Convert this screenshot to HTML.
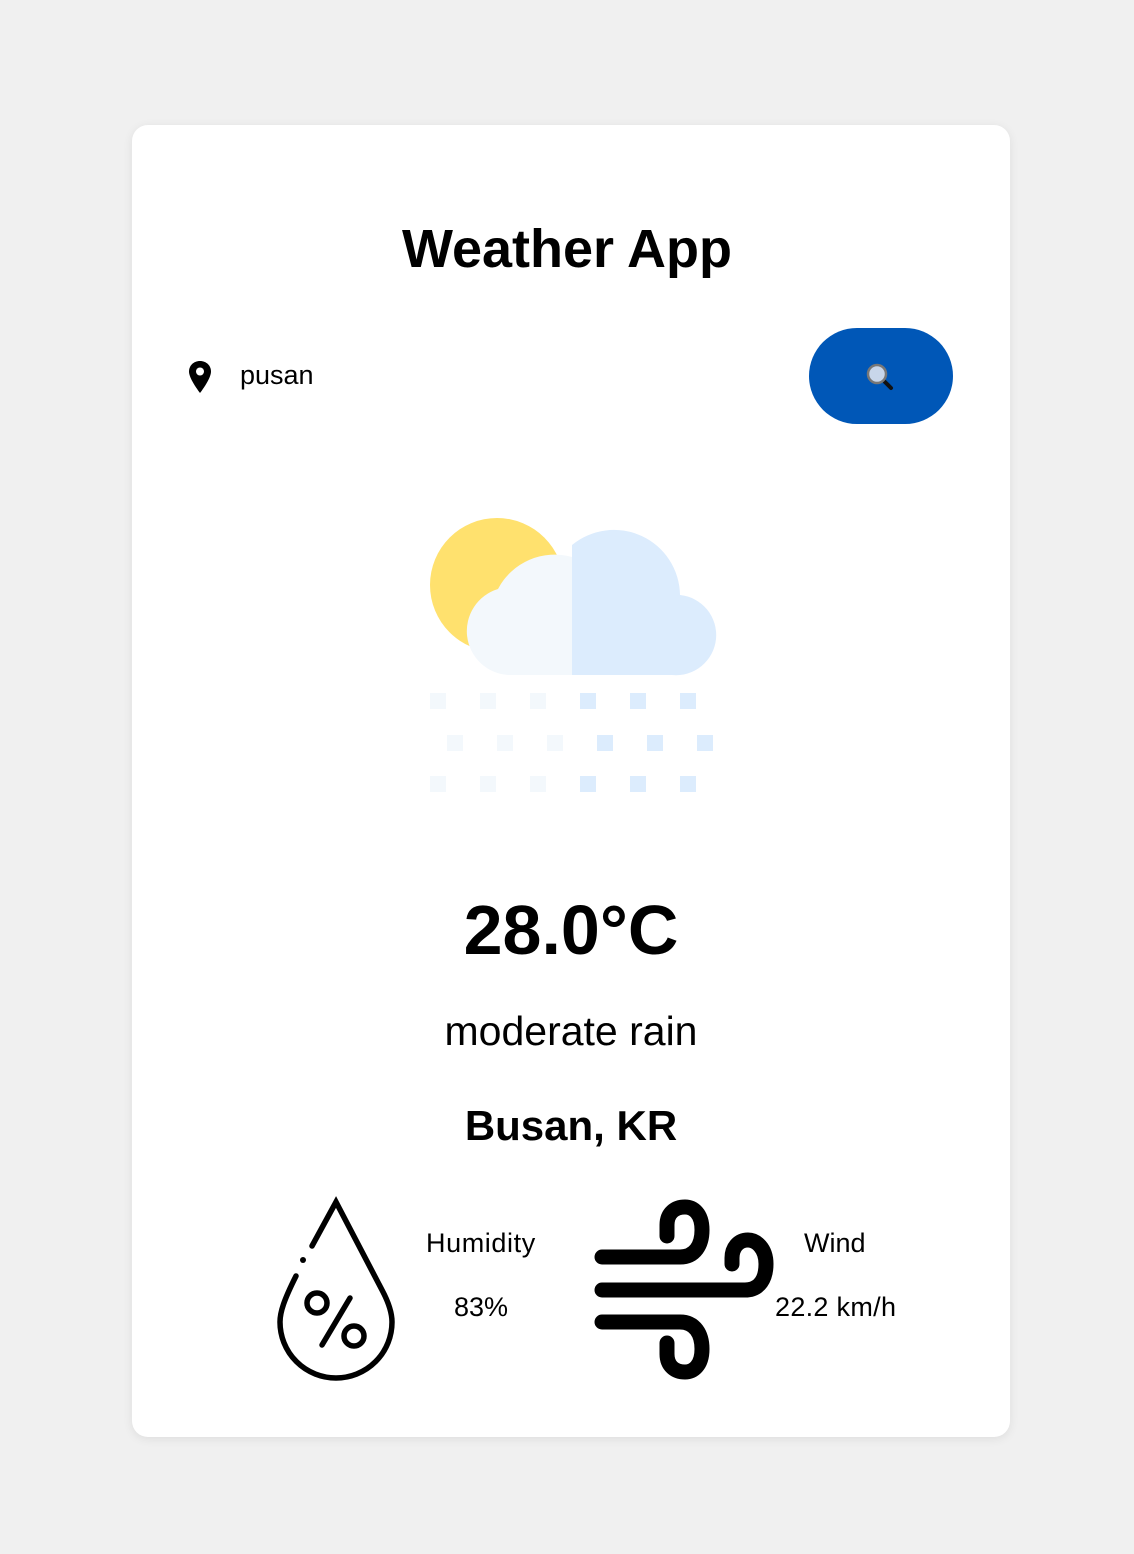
<!DOCTYPE html>
<html><head><meta charset="utf-8"><style>
html,body{margin:0;padding:0;background:#f0f0f0;width:1134px;height:1554px;overflow:hidden;font-family:"Liberation Sans","Noto Sans CJK KR",sans-serif}
.card{position:absolute;left:132px;top:125px;width:878px;height:1312px;background:#fff;border-radius:16px;box-shadow:0 2px 10px rgba(0,0,0,.08)}
.t{position:absolute;left:0;width:1134px;text-align:center;color:#000}
.btn{position:absolute;left:809px;top:328px;width:144px;height:96px;border-radius:48px;background:#0057b7}
</style></head><body>
<div class="card"></div>
<div class="t" style="top:218px;font-size:54px;font-weight:bold;left:0px">Weather App</div>
<svg style="position:absolute;left:188px;top:360px" width="24" height="34" viewBox="0 0 24 34"><path d="M12 1C5.5 1 1 5.8 1 11.5 1 19 12 33 12 33S23 19 23 11.5C23 5.8 18.5 1 12 1z" fill="#000"/><circle cx="12" cy="11.5" r="4" fill="#fff"/></svg>
<div style="position:absolute;left:240px;top:360px;font-size:27px">pusan</div>
<div class="btn"></div>
<svg style="position:absolute;left:864px;top:361px" width="32" height="30" viewBox="0 0 32 30"><line x1="18" y1="18" x2="27" y2="27" stroke="#111" stroke-width="4" stroke-linecap="round"/><circle cx="13" cy="13" r="9" fill="#c8d6ea" stroke="#777" stroke-width="2.5"/></svg>
<svg style="position:absolute;left:420px;top:510px" width="310" height="300" viewBox="420 510 310 300">
<circle cx="497" cy="585" r="67" fill="#ffe16e"/>
<path d="M572 675H508a44 44 0 0 1-10-86 64 64 0 0 1 74-32z" fill="#f3f8fc"/>
<path d="M572 545a66 66 0 0 1 108 50 40 40 0 0 1-8 80H572z" fill="#dcecfd"/>
<g fill="#f3f8fc"><rect x="430" y="693" width="16" height="16"/><rect x="480" y="693" width="16" height="16"/><rect x="530" y="693" width="16" height="16"/><rect x="447" y="735" width="16" height="16"/><rect x="497" y="735" width="16" height="16"/><rect x="547" y="735" width="16" height="16"/><rect x="430" y="776" width="16" height="16"/><rect x="480" y="776" width="16" height="16"/><rect x="530" y="776" width="16" height="16"/></g>
<g fill="#dcecfd"><rect x="580" y="693" width="16" height="16"/><rect x="630" y="693" width="16" height="16"/><rect x="680" y="693" width="16" height="16"/><rect x="597" y="735" width="16" height="16"/><rect x="647" y="735" width="16" height="16"/><rect x="697" y="735" width="16" height="16"/><rect x="580" y="776" width="16" height="16"/><rect x="630" y="776" width="16" height="16"/><rect x="680" y="776" width="16" height="16"/></g>
</svg>
<div class="t" style="top:890px;font-size:70px;font-weight:bold;left:4px">28.0°C</div>
<div class="t" style="top:1008px;font-size:41px;left:4px">moderate rain</div>
<div class="t" style="top:1102px;font-size:42px;font-weight:bold;left:4px">Busan, KR</div>
<svg style="position:absolute;left:270px;top:1195px" width="130" height="190" viewBox="270 1195 130 190" fill="none" stroke="#000" stroke-width="5.5" stroke-linecap="round">
<path d="M312 1246L336 1202 382 1290C390 1305 392 1315 392 1322A56 56 0 0 1 280 1322C280 1312 284 1300 296 1276"/>
<circle cx="303" cy="1260" r="3" fill="#000" stroke="none"/>
<circle cx="317" cy="1303" r="10"/><circle cx="354" cy="1336" r="10"/><line x1="350" y1="1298" x2="322" y2="1345"/>
</svg>
<div style="position:absolute;left:426px;top:1228px;font-size:27px;letter-spacing:0.6px">Humidity</div>
<div style="position:absolute;left:454px;top:1292px;font-size:27px">83%</div>
<svg style="position:absolute;left:590px;top:1195px" width="190" height="190" viewBox="590 1195 190 190" fill="none" stroke="#000" stroke-width="15" stroke-linecap="round" stroke-linejoin="round">
<path d="M602 1257H680C695 1257 702 1245 702 1230C702 1213 693 1207 685 1207C675 1207 667 1213 667 1225V1236"/>
<path d="M602 1290H745C760 1290 766 1278 766 1264C766 1248 756 1240 748 1240C738 1240 732 1248 732 1258V1264"/>
<path d="M602 1322H680C695 1322 702 1334 702 1349C702 1366 693 1372 685 1372C675 1372 667 1366 667 1354V1343"/>
</svg>
<div style="position:absolute;left:804px;top:1228px;font-size:27px">Wind</div>
<div style="position:absolute;left:775px;top:1292px;font-size:27px;letter-spacing:0.3px">22.2 km/h</div>
</body></html>
